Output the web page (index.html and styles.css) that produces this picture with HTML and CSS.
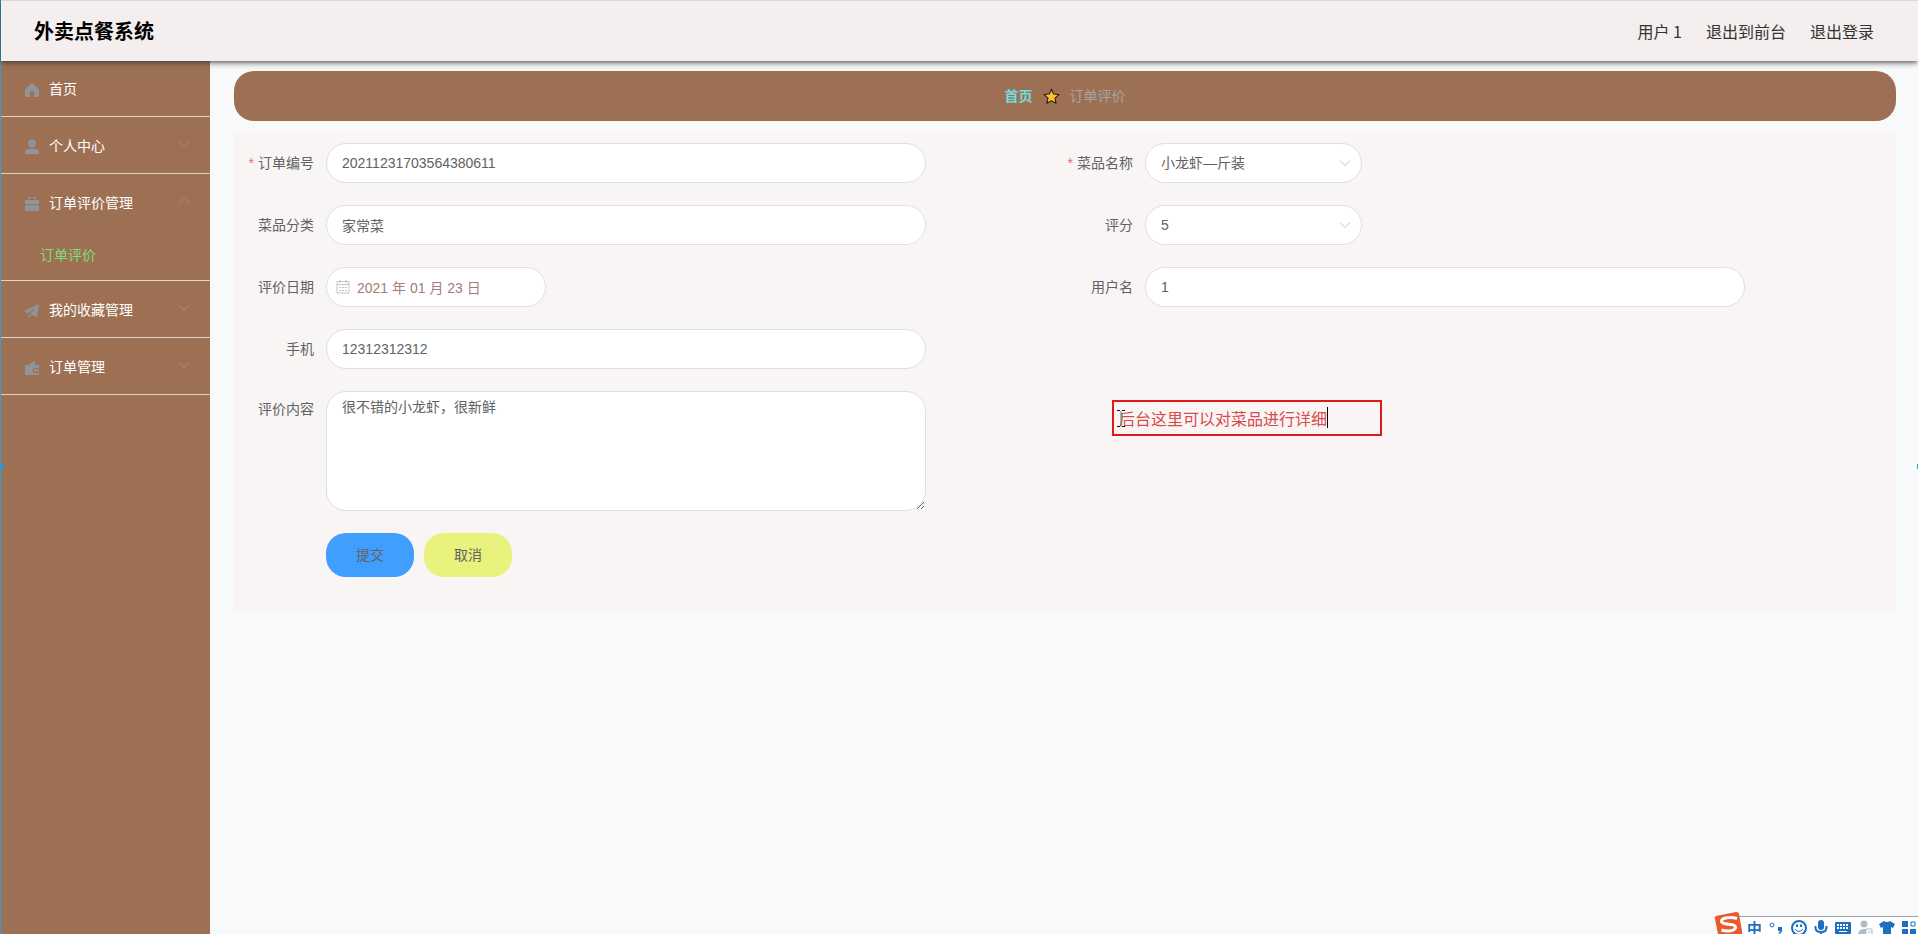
FILE: index.html
```
<!DOCTYPE html>
<html lang="zh-CN">
<head>
<meta charset="utf-8">
<title>外卖点餐系统</title>
<link rel="stylesheet" href="styles.css">
</head>
<body>
<div class="app">
  <header class="header">
    <h1 class="brand">外卖点餐系统</h1>
    <nav class="user-nav">
      <span>用户 1</span>
      <a href="#">退出到前台</a>
      <a href="#">退出登录</a>
    </nav>
  </header>
  <div class="body">
    <nav class="sidebar">
      <ul class="menu">
        <li class="menu-group"><a class="menu-item" href="#">
          <svg class="menu-icon" viewBox="0 0 16 16"><path d="M8 1 15 7.600V14.500a.5.5 0 0 1-.5.5H10V11a2 2 0 0 0-4 0v4H1.500a.5.5 0 0 1-.5-.5V7.600z"/></svg>
          <span>首页</span></a></li>
        <li class="menu-group"><a class="menu-item" href="#">
          <svg class="menu-icon" viewBox="0 0 16 16"><circle cx="8" cy="4.500" r="4"/><path d="M1 15v-2a3 3 0 0 1 3-3h8a3 3 0 0 1 3 3v2z"/></svg>
          <span>个人中心</span>
          <svg class="chevron" viewBox="0 0 12 12"><path d="m1 3.500 5 5 5-5"/></svg></a></li>
        <li class="menu-group"><a class="menu-item" href="#">
          <svg class="menu-icon" viewBox="0 0 16 16"><path d="M4 4V1h8v3h-1V2H5v2zM1 4h14v4.300H1zM1 9.300h14V15H1z"/></svg>
          <span>订单评价管理</span>
          <svg class="chevron" viewBox="0 0 12 12"><path d="m1 8.500 5-5 5 5"/></svg></a>
          <a class="submenu-item" href="#">订单评价</a></li>
        <li class="menu-group"><a class="menu-item" href="#">
          <svg class="menu-icon" viewBox="0 0 16 16"><path d="M15 1 0 8l4 2.200L13 3.500 6 11l7 3zM4.500 11.200V15l3-2.500z"/></svg>
          <span>我的收藏管理</span>
          <svg class="chevron" viewBox="0 0 12 12"><path d="m1 3.500 5 5 5-5"/></svg></a></li>
        <li class="menu-group"><a class="menu-item" href="#">
          <svg class="menu-icon" viewBox="0 0 16 16"><path d="M1 5h3l6-4 2 4h3v3h-4a2.500 2.500 0 0 0 0 5h4v2H1z"/><path d="M11 9.300h4v2.400h-4a1.200 1.200 0 0 1 0-2.400z"/></svg>
          <span>订单管理</span>
          <svg class="chevron" viewBox="0 0 12 12"><path d="m1 3.500 5 5 5-5"/></svg></a></li>
      </ul>
    </nav>
    <main class="main">
      <nav class="breadcrumb">
        <a class="crumb-home" href="#">首页</a>
        <svg class="star" viewBox="0 0 16 16"><path d="m8 1.200 2 4.500 5 .5-3.700 3.300 1 4.900L8 11.900l-4.300 2.500 1-4.900L1 6.200l5-.5z"/></svg>
        <span>订单评价</span>
      </nav>
      <form class="form">
        <div class="field">
          <label class="required" for="order-no">订单编号</label>
          <input class="control" id="order-no" type="text" value="20211231703564380611">
        </div>
        <div class="field">
          <label class="required" for="dish">菜品名称</label>
          <div class="select-wrap">
            <select class="control" id="dish"><option>小龙虾—斤装</option></select>
            <svg class="select-arrow" viewBox="0 0 12 12"><path d="m1 3.500 5 5 5-5"/></svg>
          </div>
        </div>
        <div class="field">
          <label for="category">菜品分类</label>
          <input class="control" id="category" type="text" value="家常菜">
        </div>
        <div class="field">
          <label for="score">评分</label>
          <div class="select-wrap">
            <select class="control" id="score"><option>5</option></select>
            <svg class="select-arrow" viewBox="0 0 12 12"><path d="m1 3.500 5 5 5-5"/></svg>
          </div>
        </div>
        <div class="field">
          <label for="date">评价日期</label>
          <div class="date-wrap">
            <input class="control" id="date" type="text" value="2021 年 01 月 23 日">
            <svg class="date-icon" viewBox="0 0 14 14"><path d="M1 1.500h12v11.500H1zM1 4.500h12M4 0v3M10 0v3M3 7.500h2M6 7.500h2M9 7.500h2M3 10.500h2M6 10.500h2M9 10.500h2"/></svg>
          </div>
        </div>
        <div class="field">
          <label for="username">用户名</label>
          <input class="control" id="username" type="text" value="1">
        </div>
        <div class="field field-full">
          <label for="phone">手机</label>
          <input class="control" id="phone" type="text" value="12312312312">
        </div>
        <div class="field field-full">
          <label for="content">评价内容</label>
          <textarea class="control" id="content">很不错的小龙虾，很新鲜</textarea>
        </div>
        <div class="actions">
          <button class="btn btn-submit" type="submit">提交</button>
          <button class="btn btn-cancel" type="reset">取消</button>
        </div>
      </form>
    </main>
  </div>
</div>

<div class="note">
  <input class="note-input" type="text" aria-label="批注" value="后台这里可以对菜品进行详细">
  <span class="note-caret"></span>
  <svg class="ibeam" viewBox="0 0 8 17"><path d="M0 .5h3M5 .5h3M0 16.500h3M5 16.500h3"/><path class="ibeam-stem" d="M4 1v15"/></svg>
</div>
<span class="handle handle-left"></span>
<span class="handle handle-right"></span>

<div class="ime">
  <svg class="ime-logo" viewBox="0 0 30 22"><path class="logo-bg" d="M2 4 22 0q3 0 3 2l3 17v3H4L1 7q-1-2 1-3z"/><path class="logo-s" d="M23 6.500C17 4.500 7 5.500 7.500 9.500S21.500 11 21.500 15s-8 5-14 3"/></svg>
  <span class="ime-mode">中</span>
  <svg class="ime-icon" viewBox="0 0 16 16"><circle class="line thin" cx="3" cy="5" r="2"/><path d="M9 7h4v3q0 3-3 4l-.5-1q1.500-.8 1.500-2H9z"/></svg>
  <svg class="ime-icon" viewBox="0 0 16 16"><circle class="line" cx="8" cy="8" r="7"/><path class="line thin" d="M4 9q4 5 8 0"/><path d="M5 4.500h2v2.500H5zM9 4.500h2v2.500H9z"/></svg>
  <svg class="ime-icon" viewBox="0 0 16 16"><rect x="5" y="0" width="6" height="10" rx="3"/><path class="line" d="M2.500 6v1.500q0 4.500 5.500 4.500t5.500-4.500V6M8 12v3M5 15h6"/></svg>
  <svg class="ime-icon" viewBox="0 0 16 16"><rect x="0" y="2" width="16" height="12" rx="1"/><path class="keys" d="M2 5h12M2 8h12"/><path class="cut" d="M4 11.500h8"/></svg>
  <svg class="ime-icon muted" viewBox="0 0 16 16"><circle cx="7" cy="4" r="3.500"/><path d="M1 15q0-6 6-6h2v6z"/><path class="card" d="M9 9h6v6H9zM11 12h3"/></svg>
  <svg class="ime-icon" viewBox="0 0 16 16"><path d="M5 1q3 2 6 0l5 3-2 4-2-1v8H4V7L2 8 0 4z"/></svg>
  <svg class="ime-icon" viewBox="0 0 16 16"><path d="M1 1h6v6H1zM1 9h6v6H1zM9 9h6v6H9z"/><path class="line thin" d="M10 2h4v4h-4z"/></svg>
</div>
</body>
</html>
```
FILE: styles.css
```
* { box-sizing: border-box; }
body {
  margin: 0;
  overflow: hidden;
  background: #f7f9fb;
  color: #606266;
  font: 14px/20px "Liberation Sans", "Noto Sans CJK SC", sans-serif;
}
a { color: inherit; text-decoration: none; }
input, select, textarea, button { font: inherit; color: inherit; }
svg { flex: none; fill: none; }

.app {
  display: flex;
  flex-direction: column;
  min-height: 100vh;
  border-left: 1px solid #2f9fd0;
}
.header {
  position: relative;
  z-index: 1;
  display: flex;
  align-items: center;
  justify-content: space-between;
  height: 61px;
  padding: 2px 44px 0 33px;
  border-top: 1px solid #ddd8d9;
  background: #f4eeee;
  box-shadow: 0 1px 6px #303133;
}
.brand { margin: 0; color: #000; font-size: 20px; line-height: 28px; }
.user-nav {
  display: flex;
  gap: 24px;
  padding-bottom: 2px;
  color: #333;
  font: 16px/24px "Noto Sans CJK SC", sans-serif;
}

.body { display: flex; flex: 1; }
.sidebar { flex: none; width: 209px; background: #9e7053; color: #fff; }
.menu { margin: 0; padding: 0; list-style: none; }
.menu-group { border-bottom: 1px solid #e0d2c9; }
.menu-item { display: flex; align-items: center; gap: 9px; height: 56px; padding: 2px 20px 0 23px; }
.menu-group:first-child .menu-item { height: 55px; padding-top: 0; }
.menu-icon { width: 16px; height: 16px; margin-top: 2px; fill: #909399; }
.chevron { width: 12px; height: 12px; margin: 0 0 4px auto; stroke: #b08c77; }
.submenu-item { display: block; padding: 15px 39px; color: #80dc78; }

.main { flex: 1; min-width: 0; padding: 10px 22px 0 24px; }
.breadcrumb {
  display: flex;
  align-items: center;
  justify-content: center;
  gap: 10px;
  height: 50px;
  border-radius: 20px;
  background: #9e7053;
  color: #a5a3a5;
}
.crumb-home { color: #71dede; font-weight: bold; }
.star { width: 17px; height: 17px; fill: #ffc233; stroke: #231a10; stroke-width: 1; stroke-linejoin: round; }

.form {
  display: grid;
  grid-template-columns: 1fr 1fr;
  row-gap: 22px;
  margin-top: 10px;
  padding: 12px 12px 34px;
  background: #f9f5f4;
}
.field { display: flex; }
.field-full { grid-column: 1 / -1; }
.field label { flex: none; width: 80px; padding-right: 12px; line-height: 40px; text-align: right; white-space: nowrap; }
.required::before { content: "*"; margin-right: 4px; color: #f56c6c; }
.control {
  width: 600px;
  height: 40px;
  padding: 0 15px;
  border: 1px solid #dcdfe6;
  border-radius: 20px;
  outline: 0;
  background: #fff;
}
textarea.control { display: block; height: 120px; padding: 5px 15px; resize: vertical; }
.field label[for="content"] { line-height: 36px; }
.select-wrap, .date-wrap { position: relative; }
.select-wrap .control { display: block; width: 217px; appearance: none; }
.date-wrap .control { display: block; width: 220px; padding-left: 30px; color: #9e7f76; }
.select-arrow { position: absolute; top: 14px; right: 11px; width: 12px; height: 12px; stroke: #c0c4cc; }
.date-icon { position: absolute; top: 13px; left: 10px; width: 14px; height: 14px; stroke: #c0c4cc; }
.actions { display: flex; grid-column: 1 / -1; gap: 10px; padding-left: 80px; }
.btn { width: 88px; height: 44px; border: 0; border-radius: 20px; }
.btn-submit { background: #409eff; }
.btn-cancel { background: #e8f27c; }

.note { position: absolute; top: 400px; left: 1112px; width: 270px; height: 36px; border: 2px solid #df1818; }
.note-input { width: 100%; height: 32px; padding: 0 5px; border: 0; outline: 0; background: transparent; color: #d94a4a; font-size: 16px; }
.note-caret { position: absolute; top: 5px; left: 213px; width: 1px; height: 21px; background: #000; }
.ibeam { position: absolute; top: 8px; left: 3px; width: 8px; height: 17px; stroke: #111; }
.ibeam-stem { stroke: #3f8f68; }
.handle { position: absolute; top: 464px; width: 3px; height: 5px; background: #12a0ee; }
.handle-left { left: 0; }
.handle-right { right: 0; width: 1px; background: #2f9fd0; }

.ime {
  position: fixed;
  right: 0;
  bottom: 0;
  display: flex;
  align-items: center;
  gap: 6px;
  width: 190px;
  height: 18px;
  padding: 4px 0 0 19px;
  border-top: 1px solid #9fa3a8;
  background: #fff;
  color: #1d6fc0;
}
.ime-logo { position: absolute; bottom: 0; left: -14px; width: 30px; height: 22px; }
.logo-bg { fill: #ec5a2c; }
.logo-s { stroke: #fff; stroke-width: 3; }
.ime-mode { width: 16px; font: bold 15px/16px "Noto Sans CJK SC", sans-serif; }
.ime-icon { width: 16px; height: 16px; fill: currentColor; }
.ime-icon .line { fill: none; stroke: currentColor; stroke-width: 2; }
.ime-icon .thin { stroke-width: 1; }
.keys { stroke: #fff; stroke-width: 2; stroke-dasharray: 2 1; }
.cut { stroke: #fff; stroke-width: 1; }
.card { fill: #fff; stroke: currentColor; stroke-width: 1; }
.muted { color: #b3bccb; }
```
